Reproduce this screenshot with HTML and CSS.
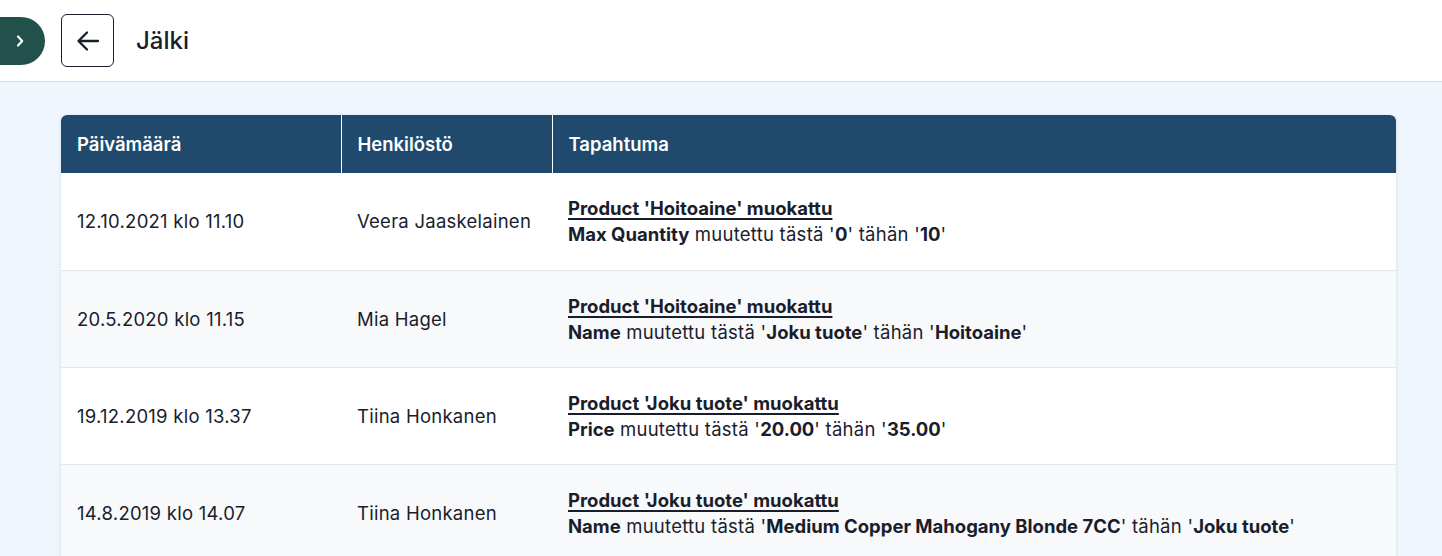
FILE: index.html
```html
<!DOCTYPE html>
<html lang="fi">
<head>
<meta charset="utf-8">
<title>Jälki</title>
<link rel="stylesheet" href="styles.css">
</head>
<body>
<header class="topbar">
  <button class="side-toggle" aria-label="Avaa valikko">
    <svg width="12" height="14" viewBox="0 0 12 14"><path d="M4 2.5 L8.2 7 L4 11.5" fill="none" stroke="#fff" stroke-width="2.2" stroke-linecap="round" stroke-linejoin="round"/></svg>
  </button>
  <button class="back-btn" aria-label="Takaisin">
    <svg width="26" height="26" viewBox="0 0 26 26"><path d="M23 13 H3.5 M12 4.5 L3.5 13 L12 21.5" fill="none" stroke="#1a1d2b" stroke-width="2.3" stroke-linecap="round" stroke-linejoin="round"/></svg>
  </button>
  <h1 class="title">Jälki</h1>
</header>
<main class="content">
  <div class="table-wrap">
    <table class="log">
      <thead>
        <tr>
          <th class="c-date">Päivämäärä</th>
          <th class="c-staff">Henkilöstö</th>
          <th class="c-event">Tapahtuma</th>
        </tr>
      </thead>
      <tbody>
        <tr>
          <td>12.10.2021 klo 11.10</td>
          <td>Veera Jaaskelainen</td>
          <td><a class="ev-title" href="#">Product 'Hoitoaine' muokattu</a><br><b>Max Quantity</b> muutettu tästä '<b>0</b>' tähän '<b>10</b>'</td>
        </tr>
        <tr>
          <td>20.5.2020 klo 11.15</td>
          <td>Mia Hagel</td>
          <td><a class="ev-title" href="#">Product 'Hoitoaine' muokattu</a><br><b>Name</b> muutettu tästä '<b>Joku tuote</b>' tähän '<b>Hoitoaine</b>'</td>
        </tr>
        <tr>
          <td>19.12.2019 klo 13.37</td>
          <td>Tiina Honkanen</td>
          <td><a class="ev-title" href="#">Product 'Joku tuote' muokattu</a><br><b>Price</b> muutettu tästä '<b>20.00</b>' tähän '<b>35.00</b>'</td>
        </tr>
        <tr>
          <td>14.8.2019 klo 14.07</td>
          <td>Tiina Honkanen</td>
          <td><a class="ev-title" href="#">Product 'Joku tuote' muokattu</a><br><b>Name</b> muutettu tästä '<b>Medium Copper Mahogany Blonde 7CC</b>' tähän '<b>Joku tuote</b>'</td>
        </tr>
      </tbody>
    </table>
  </div>
</main>
</body>
</html>
```

FILE: styles.css
```css
* { box-sizing: border-box; }
html, body {
  margin: 0;
  padding: 0;
  height: 100%;
}
body {
  font-family: Inter, "Noto Sans", Arial, sans-serif;
  color: #1a1d2b;
  background: #eff6fd;
  overflow: hidden;
}
.topbar {
  height: 82px;
  background: #fff;
  border-bottom: 1px solid #c9e0f7;
  display: flex;
  align-items: center;
}
.side-toggle {
  width: 45px;
  height: 48px;
  border: none;
  background: #22504a;
  border-radius: 0 24px 24px 0;
  display: flex;
  align-items: center;
  justify-content: center;
  padding: 0;
  margin-right: 16px;
  cursor: pointer;
}
.side-toggle svg { margin-left: -5px; }
.back-btn {
  width: 53px;
  height: 53px;
  border: 1px solid #1a1d2b;
  border-radius: 6px;
  background: #fff;
  display: flex;
  align-items: center;
  justify-content: center;
  padding: 0;
  margin-right: 22px;
  cursor: pointer;
}
.title {
  font-size: 24px;
  font-weight: 500;
  margin: 0;
  color: #1a1d2b;
}
.content {
  padding: 33px 46px 0 61px;
}
.table-wrap {
  background: #fff;
  border-radius: 6px 6px 0 0;
  overflow: hidden;
  box-shadow: 0 1px 4px rgba(30, 60, 110, 0.12);
}
.log {
  width: 100%;
  border-collapse: collapse;
  table-layout: fixed;
  font-size: 18.5px;
}
.log th {
  background: #1f4a6d;
  color: #fff;
  text-align: left;
  font-weight: 600;
  height: 58px;
  padding: 0 16px;
  border-left: 1px solid #fff;
}
.log th:first-child { border-left: none; }
.c-date { width: 280px; }
.c-staff { width: 211px; }
.log td {
  height: 97px;
  padding: 0 16px;
  vertical-align: middle;
  line-height: 26px;
  border-top: 1px solid #e4e6ea;
  color: #1a1d2b;
  letter-spacing: 0.25px;
  white-space: nowrap;
}
.log tbody tr:first-child td { border-top: none; }
.log tbody tr:nth-child(even) td { background: #f8f9fb; }
.log td b {
  font-weight: 700;
  letter-spacing: 0;
}
.ev-title {
  color: #1a1d2b;
  font-weight: 700;
  letter-spacing: 0;
  text-decoration: underline;
  text-underline-offset: 3px;
  text-decoration-thickness: 1.5px;
}
```
